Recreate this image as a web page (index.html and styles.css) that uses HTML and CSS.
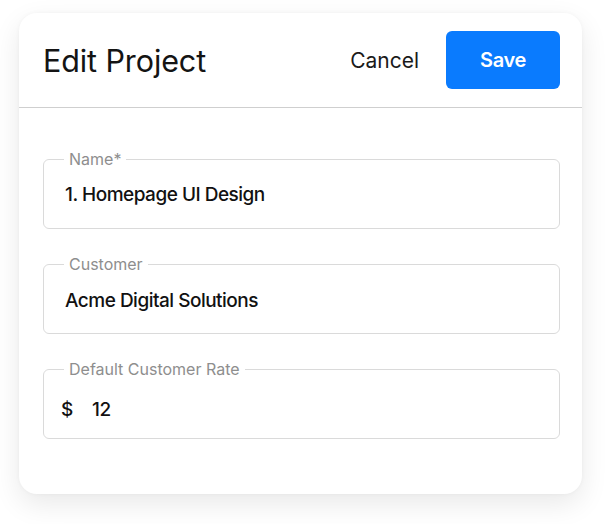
FILE: index.html
```html
<!DOCTYPE html>
<html lang="en">
<head>
<meta charset="utf-8">
<title>Edit Project</title>
<link rel="stylesheet" href="styles.css">
</head>
<body>
<div class="page">
  <section class="card">
    <header class="card-header">
      <h1 class="title">Edit Project</h1>
      <div class="actions">
        <button class="btn-cancel" type="button">Cancel</button>
        <button class="btn-save" type="button">Save</button>
      </div>
    </header>
    <div class="card-body">
      <fieldset class="field">
        <legend class="field-label">Name*</legend>
        <div class="field-value">1. Homepage UI Design</div>
      </fieldset>
      <fieldset class="field">
        <legend class="field-label">Customer</legend>
        <div class="field-value field-value--low">Acme Digital Solutions</div>
      </fieldset>
      <fieldset class="field">
        <legend class="field-label">Default Customer Rate</legend>
        <div class="field-value field-value--money"><span class="prefix">$</span><span>12</span></div>
      </fieldset>
    </div>
  </section>
</div>
</body>
</html>
```
FILE: styles.css
```css
* { box-sizing: border-box; }

html, body {
  margin: 0;
  padding: 0;
  background: #ffffff;
}

body {
  font-family: Inter, "Liberation Sans", sans-serif;
  color: #111111;
}

.page {
  padding: 13px 28px 30px 19px;
}

.card {
  width: 563px;
  background: #ffffff;
  border-radius: 18px;
  box-shadow: 0 10px 28px rgba(0, 0, 0, 0.09), 0 0 4px rgba(0, 0, 0, 0.04);
  overflow: hidden;
}

.card-header {
  height: 95px;
  display: flex;
  align-items: center;
  justify-content: space-between;
  padding: 0 22px 0 24px;
  border-bottom: 1px solid #cfcfcf;
}

.title {
  margin: 0;
  font-size: 30.5px;
  font-weight: 400;
  letter-spacing: -0.1px;
  color: #141414;
}

.actions {
  display: flex;
  align-items: center;
  gap: 27px;
}

.btn-cancel {
  border: 0;
  background: none;
  padding: 0;
  font-family: Inter, "Liberation Sans", sans-serif;
  font-size: 21px;
  color: #1a1a1a;
  cursor: pointer;
}

.btn-save {
  width: 114px;
  height: 58px;
  border: 0;
  border-radius: 6px;
  background: #0a7bfe;
  color: #ffffff;
  font-family: Inter, "Liberation Sans", sans-serif;
  font-size: 20px;
  font-weight: 600;
  letter-spacing: -0.3px;
  cursor: pointer;
}

.card-body {
  display: flex;
  flex-direction: column;
  gap: 26px;
  padding: 42px 22px 55px 24px;
}

.field {
  margin: 0;
  padding: 0 0 8px 0;
  border: 1px solid #dadada;
  border-radius: 6px;
  min-width: 0;
}

.field-label {
  margin-left: 20px;
  padding: 0 5px;
  font-size: 16px;
  line-height: 18px;
  color: #8e8e8e;
}

.field-value {
  height: 52px;
  display: flex;
  align-items: center;
  padding: 0 21px;
  font-size: 19px;
  font-weight: 500;
  letter-spacing: -0.5px;
  color: #111111;
}

.field-value--low {
  padding-top: 3px;
}

.field-value--money {
  padding-left: 17px;
  padding-top: 11px;
}

.prefix {
  width: 31px;
}
```
